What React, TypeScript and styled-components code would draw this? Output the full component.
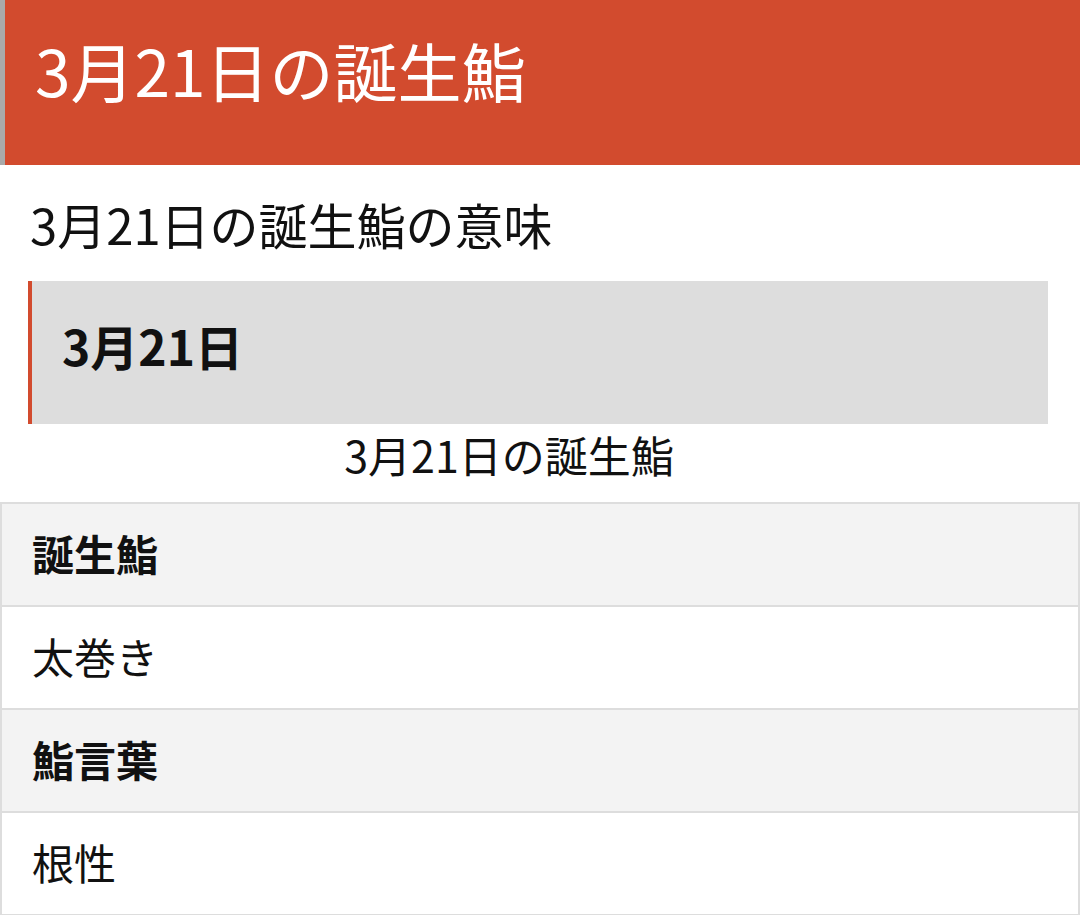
import styled, { createGlobalStyle } from 'styled-components'

const GlobalStyle = createGlobalStyle`
  body {
    margin: 0;
    background: #fff;
    font-family: "Noto Sans CJK JP", "Noto Sans", sans-serif;
    color: #111;
  }
`

const Header = styled.header`
  height: 165px;
  box-sizing: border-box;
  background: #d24b2e;
  border-left: 5px solid #aaaaaa;
  padding: 24px 0 0 30px;
`

const Title = styled.h1`
  margin: 0;
  font-size: 64px;
  font-weight: 400;
  line-height: 90px;
  color: #fff;
`

const Subtitle = styled.h2`
  margin: 0;
  padding: 24px 0 0 30px;
  font-size: 49px;
  font-weight: 400;
  line-height: 70px;
`

const DateBox = styled.div`
  margin: 22px 32px 0 28px;
  height: 143px;
  box-sizing: border-box;
  background: #dddddd;
  border-left: 4px solid #d24b2e;
  padding-left: 30px;
  display: flex;
  align-items: center;
`

const DateLabel = styled.h3`
  margin: 0;
  font-size: 48px;
  font-weight: 700;
  line-height: 1;
  padding-bottom: 16px;
`

const Caption = styled.div`
  text-align: center;
  padding-right: 62px;
  font-size: 43px;
  line-height: 60px;
  margin-bottom: 18px;
`

const Table = styled.table`
  width: 100%;
  border-collapse: collapse;
`

const Cell = styled.td<{ $head?: boolean }>`
  height: 103px;
  box-sizing: border-box;
  padding: 0 0 4px 30px;
  border: 2px solid #dddddd;
  background: ${({ $head }) => ($head ? '#f3f3f3' : '#fff')};
  font-size: 42px;
  font-weight: ${({ $head }) => ($head ? 700 : 400)};
  vertical-align: middle;
`

const rows: { label: string; value: string }[] = [
  { label: '誕生鮨', value: '太巻き' },
  { label: '鮨言葉', value: '根性' },
]

export default function App() {
  return (
    <>
      <GlobalStyle />
      <Header>
        <Title>3月21日の誕生鮨</Title>
      </Header>
      <Subtitle>3月21日の誕生鮨の意味</Subtitle>
      <DateBox>
        <DateLabel>3月21日</DateLabel>
      </DateBox>
      <Caption>3月21日の誕生鮨</Caption>
      <Table>
        <tbody>
          {rows.flatMap((r) => [
            <tr key={r.label}>
              <Cell $head>{r.label}</Cell>
            </tr>,
            <tr key={r.value}>
              <Cell>{r.value}</Cell>
            </tr>,
          ])}
        </tbody>
      </Table>
    </>
  )
}
